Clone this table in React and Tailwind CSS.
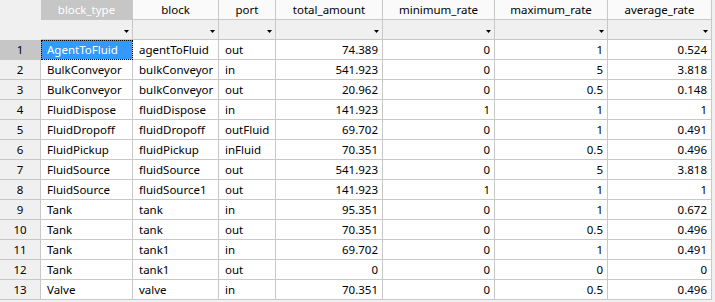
import React from "react";

const cols = ["block_type", "block", "port", "total_amount", "minimum_rate", "maximum_rate", "average_rate"];
const rows = [
  ["AgentToFluid", "agentToFluid", "out", "74.389", "0", "1", "0.524"],
  ["BulkConveyor", "bulkConveyor", "in", "541.923", "0", "5", "3.818"],
  ["BulkConveyor", "bulkConveyor", "out", "20.962", "0", "0.5", "0.148"],
  ["FluidDispose", "fluidDispose", "in", "141.923", "1", "1", "1"],
  ["FluidDropoff", "fluidDropoff", "outFluid", "69.702", "0", "1", "0.491"],
  ["FluidPickup", "fluidPickup", "inFluid", "70.351", "0", "0.5", "0.496"],
  ["FluidSource", "fluidSource", "out", "541.923", "0", "5", "3.818"],
  ["FluidSource", "fluidSource1", "out", "141.923", "1", "1", "1"],
  ["Tank", "tank", "in", "95.351", "0", "1", "0.672"],
  ["Tank", "tank", "out", "70.351", "0", "0.5", "0.496"],
  ["Tank", "tank1", "in", "69.702", "0", "1", "0.491"],
  ["Tank", "tank1", "out", "0", "0", "0", "0"],
  ["Valve", "valve", "in", "70.351", "0", "0.5", "0.496"],
];

const Arrow = () => (
  <svg width="5" height="3" viewBox="0 0 5 3" className="absolute right-[3px] top-[10px]">
    <polygon points="0,0 5,0 2.5,3" fill="#000" />
  </svg>
);

export default function App() {
  return (
    <div
      className="w-[715px] h-[302px] bg-[#f0f0f0] overflow-hidden text-[11.5px] text-black leading-none"
      style={{ fontFamily: '"Noto Sans", "Segoe UI", sans-serif' }}
    >
      <div className="grid grid-cols-[41px_92px_86px_57px_107px_112px_113px_104px] auto-rows-[20px] w-[712px]">
        <div className="bg-[#f0f0f0]" />
        {cols.map((c, i) => (
          <div
            key={c}
            className={
              "flex items-center justify-center border-r border-b border-[#c8c8c8] " +
              (i === 0 ? "bg-[#c6c6c6] text-white" : "bg-[#fafafa]")
            }
          >
            {c}
          </div>
        ))}
        <div className="bg-[#f0f0f0]" />
        {cols.map((c) => (
          <div key={c + "f"} className="relative bg-[#f0f0f0] border-r border-b border-[#c8c8c8]">
            <Arrow />
          </div>
        ))}
        {rows.map((r, ri) => (
          <React.Fragment key={ri}>
            <div
              className={
                "flex items-center justify-center border-r border-b border-[#c8c8c8] " +
                (ri === 0 ? "bg-[#c6c6c6]" : "bg-[#f0f0f0]")
              }
            >
              {ri + 1}
            </div>
            {r.map((v, ci) => {
              const num = ci >= 3;
              const sel = ri === 0 && ci === 0;
              return (
                <div
                  key={ci}
                  className={
                    "flex items-center border-r border-b border-[#c8c8c8] whitespace-nowrap overflow-hidden " +
                    (num ? "justify-end pr-[4px] " : "pl-[6px] ") +
                    (sel ? "bg-[#3399ff] text-white outline-1 outline-dotted outline-black -outline-offset-1" : "bg-white")
                  }
                >
                  {v}
                </div>
              );
            })}
          </React.Fragment>
        ))}
      </div>
    </div>
  );
}
